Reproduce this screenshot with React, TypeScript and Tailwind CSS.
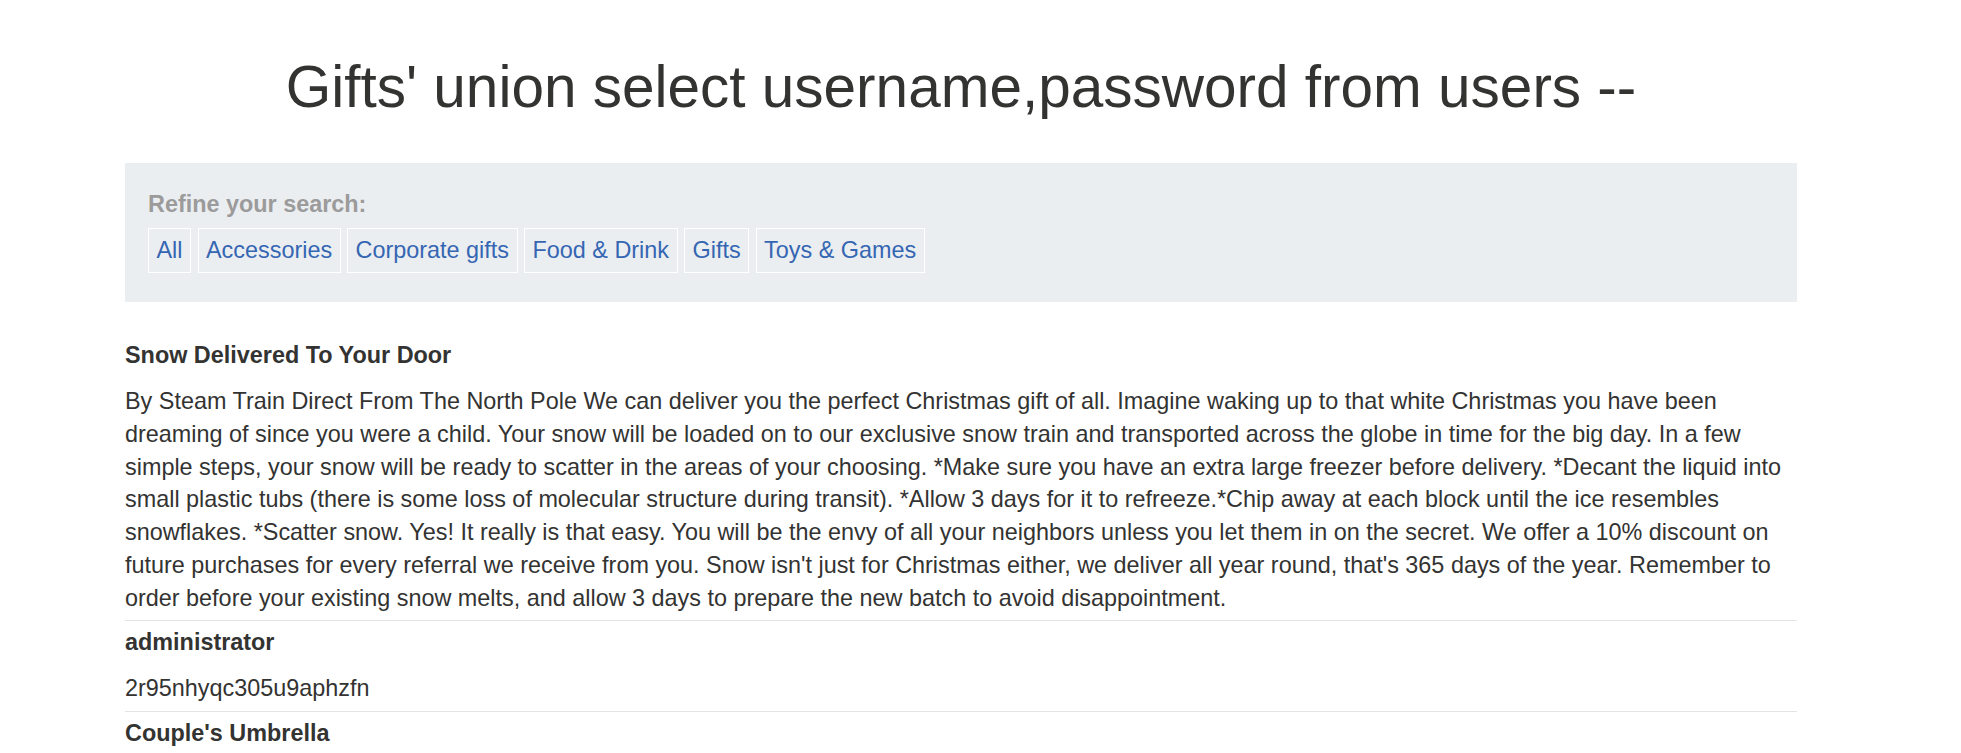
const filters = ["All", "Accessories", "Corporate gifts", "Food & Drink", "Gifts", "Toys & Games"]

const rows: { title: string; body?: string }[] = [
  {
    title: "Snow Delivered To Your Door",
    body: "By Steam Train Direct From The North Pole We can deliver you the perfect Christmas gift of all. Imagine waking up to that white Christmas you have been dreaming of since you were a child. Your snow will be loaded on to our exclusive snow train and transported across the globe in time for the big day. In a few simple steps, your snow will be ready to scatter in the areas of your choosing. *Make sure you have an extra large freezer before delivery. *Decant the liquid into small plastic tubs (there is some loss of molecular structure during transit). *Allow 3 days for it to refreeze.*Chip away at each block until the ice resembles snowflakes. *Scatter snow. Yes! It really is that easy. You will be the envy of all your neighbors unless you let them in on the secret. We offer a 10% discount on future purchases for every referral we receive from you. Snow isn't just for Christmas either, we deliver all year round, that's 365 days of the year. Remember to order before your existing snow melts, and allow 3 days to prepare the new batch to avoid disappointment.",
  },
  { title: "administrator", body: "2r95nhyqc305u9aphzfn" },
  { title: "Couple's Umbrella" },
]

export default function App() {
  return (
    <div className="min-h-screen bg-white text-[#333332] font-['Liberation_Sans',Arial,sans-serif]">
      <div className="ml-[125px] w-[1672px]">
        <h1 className="pt-[52px] text-center text-[58.5px] leading-[70px] font-normal">
          Gifts' union select username,password from users --
        </h1>

        <section className="mt-[41px] bg-[#ebeef1] px-[23px] pt-[25px] pb-[29px]">
          <div className="text-[23.4px] leading-[33px] font-bold text-[#9b9b9b]">
            Refine your search:
          </div>
          <div className="mt-[7px] flex gap-[6.5px]">
            {filters.map((f) => (
              <a
                key={f}
                className="border border-white px-[7.5px] py-[6px] text-[23.4px] leading-[31px] text-[#3566b3]"
              >
                {f}
              </a>
            ))}
          </div>
        </section>

        <table className="mt-[32px] w-full border-collapse text-[23.4px]">
          <tbody>
            {rows.map((r) => (
              <RowPair key={r.title} title={r.title} body={r.body} />
            ))}
          </tbody>
        </table>
      </div>
    </div>
  )
}

function RowPair({ title, body }: { title: string; body?: string }) {
  return (
    <>
      <tr>
        <th className="pt-[5px] pb-[5px] text-left font-bold leading-[33px]">{title}</th>
      </tr>
      {body && (
        <tr className="border-b border-[#e4e4e4]">
          <td className="pt-[8px] pb-[6px] leading-[32.76px]">{body}</td>
        </tr>
      )}
    </>
  )
}
